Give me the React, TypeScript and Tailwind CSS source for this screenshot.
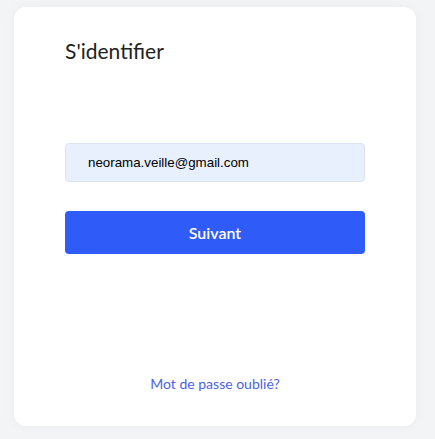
export default function App() {
  return (
    <div className="min-h-screen w-[435px] h-[439px] bg-[#f3f4f6] pt-[7px] pl-[14px]" style={{ fontFamily: 'Lato, "Noto Sans", sans-serif' }}>
      <div className="w-[402px] h-[419px] bg-white rounded-xl shadow-[0_0_12px_rgba(0,0,0,0.04)] flex flex-col px-[51px]">
        <h1 className="mt-[29px] text-[21px] leading-[30px] text-[#222]">S'identifier</h1>

        <input
          type="email"
          defaultValue="neorama.veille@gmail.com"
          className="mt-[77px] h-[39px] w-full rounded bg-[#e8f0fe] border border-[#dde3ec] pl-[22px] text-[13.33px] text-black outline-none"
          style={{ fontFamily: '"Liberation Sans", Arial, sans-serif' }}
        />

        <button className="mt-[29px] h-[43px] w-full rounded bg-[#2f5bf9] text-white text-[16px] font-semibold">
          Suivant
        </button>

        <a href="#" className="mt-auto mb-[32px] text-center text-[14px] text-[#4a63e6]">
          Mot de passe oublié?
        </a>
      </div>
    </div>
  );
}
